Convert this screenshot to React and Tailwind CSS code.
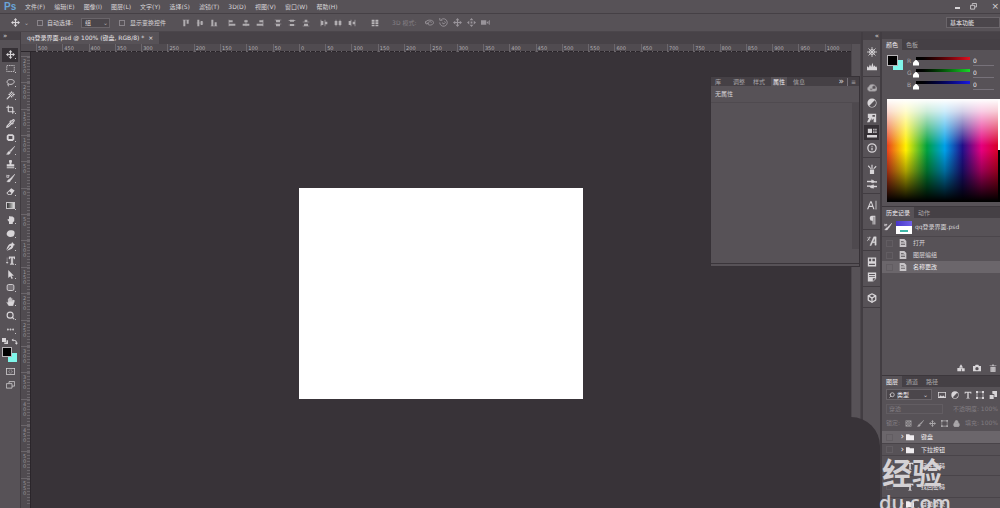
import {
  Box, Crop, Ellipsis, Info, Lock, Pipette, Search, Wand,
} from 'lucide-react'

// ── data ─────────────────────────────────────────────────────────────────────

const MENUS = ['文件(F)', '编辑(E)', '图像(I)', '图层(L)', '文字(Y)', '选择(S)', '滤镜(T)', '3D(D)', '视图(V)', '窗口(W)', '帮助(H)']

const H_RULER = Array.from({ length: 31 }, (_, i) => Math.abs(i * 50 - 500))
const V_RULER = Array.from({ length: 17 }, (_, i) => Math.abs(i * 50 - 250))

// small filled icons on a 12x12 grid
const SHAPES = {
  move: <path d="M6 0l2.500 3H6.800v2.200H9V3.500L12 6 9 8.500V6.800H6.800V9h1.700L6 12 3.500 9h1.700V6.800H3v1.700L0 6l3-2.500v1.700h2.200V3H3.500z" />,
  marquee: <rect x="1" y="2" width="10" height="8" fill="none" stroke="currentColor" strokeDasharray="2 1" />,
  lasso: <path d="M3.500 8C0 6.500 1 2 6 2s6 3 4 5-5 1.800-6.500 1S2 10 4 11" fill="none" stroke="currentColor" strokeWidth="1.200" />,
  patch: <path d="M3 1.500h6l2 2v5l-2 2H3l-2-2v-5zM3.500 4v4h5V4z" fillRule="evenodd" />,
  brush: <path d="M12 0L6.500 7.800 4.800 6.500zM4.200 7l1.800 1.500C5.500 11 3 11.500.5 11 2.500 10 2 7.500 4.200 7z" stroke="currentColor" strokeWidth=".5" />,
  stamp: <path d="M4 1.500a2 1.800 0 0 1 4 0c0 1.500-.8 2-.8 4H11v3H1v-3h3.800c0-2-.8-2.500-.8-4zM1 9.500h10V11H1z" />,
  history: <path d="M12 0L6 5.500 4.500 7C3 7 3 9 1 10c2 1 5 .5 5-1.500L7.500 7zM1 4.500C1 2 3.500 1 5 2.500M1 1v3.500h3" stroke="currentColor" strokeWidth=".6" />,
  eraser: <path d="M7 1.500l4.500 3L7 10.500H3L.5 8zM2 8l1.500 1.500H6L7.200 8 4.500 5.800z" fillRule="evenodd" />,
  smudge: <path d="M4 12V9L2 6.500c0-1 1-1.500 2-.5V2.500C4 1 5.500 1 5.500 2.500 6 .5 7.500 1 7.500 2.500c.5-1 2-.5 2 .8.8-.5 1.500 0 1.500 1V8L9 10v2z" />,
  sponge: <path d="M2 3.500C4 1 9 1 11 3c1 2 .5 5-1 6.500-3 1.500-6 1.500-8-.5C.5 7.500.5 5 2 3.500z" />,
  pen: <path d="M8 0l4 4-2 .5C10 8 7 10 1 11.500L5.500 7A1 1 0 1 0 4.700 6.300L.5 10.800C2 5 4 2.500 7.500 2z" />,
  type: <path d="M4 1h8v3h-1L10.500 2.400H9V10l1.500.5v.8h-5v-.8L7 10V2.400H5.500L5 4H4zM1.500 2v7M0 8l1.500 2L3 8" stroke="currentColor" strokeWidth=".5" />,
  arrow: <path d="M3 0l7.500 7.500H7.300l1.900 3.600-1.700.9-1.800-3.700L3 10.500z" />,
  shape: <rect x="1.500" y="2" width="9" height="8" rx="2" fill="#777277" stroke="currentColor" strokeWidth="1.200" />,
  hand: <path d="M3.500 12L.5 7c0-1 1-1 2 .5V2.500c0-1 1.300-1 1.300 0V1C3.800 0 5.300 0 5.300 1V.8C5.300-.2 7-.2 7 .8V2c0-1 1.600-1 1.600 0v2c0-1 1.500-1 1.500 0L11 4c.8 0 .8 1 .5 2L9.500 12zM3.800 3v3M5.300 2v4M7 2v4M8.600 3v3" stroke="#575257" strokeWidth=".3" />,
  mask: <><rect x=".5" y="2" width="11" height="8" fill="none" stroke="currentColor" /><circle cx="6" cy="6" r="2.200" fill="none" stroke="currentColor" strokeDasharray="1 1" /></>,
  screen: <path d="M4 3V.8h7.500v6H8M.5 3.500H8v6H.5z" fill="none" stroke="currentColor" />,
  swap: <path d="M1 3.500L4 1v2c4 0 6 1.500 6 5h2l-2.700 3.500L6.500 8h2C8.500 5.500 7 4.500 4 4.500V6z" />,
  defaults: <path d="M0 0h8v8H0zM9 4.500h3V12H4.500V9H9z" />,
  wheel: <path d="M6 0v12M0 6h12M1.800 1.800l8.400 8.400M10.200 1.800l-8.400 8.400M9 6a3 3 0 1 1-6 0 3 3 0 0 1 6 0z" fill="none" stroke="currentColor" />,
  histogram: <path d="M0 10V6l1-1 1 2 1.500-4L5 6l1.500-5L8 6l1-2 1 2 1-1 1 2v3z" />,
  cloud: <path d="M3 10a3 3 0 0 1-1-5.500A4.500 4 0 0 1 10.500 4 3 3.200 0 0 1 9.500 10zM3.500 7a1.500 1.500 0 1 0 3-1 2 2 0 1 1 3 1" fillRule="evenodd" fill="#b0adb0" stroke="#898489" strokeWidth=".8" />,
  adjust: <path d="M6 .5a5.500 5.500 0 1 0 0 11 5.500 5.500 0 0 0 0-11zm3.200 2.300A4.500 4.500 0 0 1 2.800 9.200z" fillRule="evenodd" />,
  styles: <path d="M1 1h10v10H8V6.500L5.500 9V6L3 11H0l2.500-5H1zM6.500 2.500v2h3v-2z" fillRule="evenodd" />,
  props: <path d="M1 1h5v5H1zM7.500 1H9v2H7.500zM10 1h1.500v2H10zM7.500 4H9v2H7.500zM10 4h1.500v2H10zM0 8.500h12v3H0z" />,
  brushes: <path d="M3.500 6.500h5V12h-5zM5.300 6V1h1.400v5zM4.200 6L1 2.800 2 1.500 5 5.500zM7.500 5.500L10.500 2l1 1.200L8.500 6z" />,
  presets: <path d="M0 2.500h5.500V1L8 2l1 1-1 1.500H5.500v-1H0zM12 8.500H8V7L4.500 8l-1 1 1 1.500L8 11v-1.500h4zM8 3h4v1H9zM0 8h4v1H0z" stroke="currentColor" strokeWidth=".6" />,
  char: <path d="M0 11L4 1.500h1.500L9 11H7.500L6.600 8.300H2.600L1.600 11zM3 7h3.200L4.700 3zM10.300 1h1v10.500h-1z" fillRule="evenodd" />,
  pilcrow: <path d="M10 1v10.500H8.800V2.200h-.9v9.300H6.700V7A3 3 0 0 1 6 1z" />,
  glyphs: <path d="M3.500 11.500L8 1h3v10H9.500V8H6.500L5 11.500zM7 6.800h2.500V2.500zM0 2h5M3.500.5C3 3 2 5 0 6M1 3.500l3 2" stroke="currentColor" strokeWidth=".5" fillRule="evenodd" />,
  library: <path d="M1 .5h10v11H1zM2.500 2v3H5V2zM6.500 2v3h3V2zM2.500 8v1.500h7V8z" fillRule="evenodd" />,
  notes: <path d="M1 .5h10V8l-3.500 3.500H1zM2.500 2.500v1h7v-1zM2.500 5v1h7V5zM7 11V7.500h3.500z" fillRule="evenodd" />,
  doc: <path d="M1 0h7l3 3v9H1zM3 3v1h4V3zM3 5.500v1h6v-1zM3 8v1h6V8z" fillRule="evenodd" />,
  folder: <path d="M0 2h5l1 1.500h6V11H0z" />,
  newdoc: <path d="M6 .5l2.500 4h-5zM.5 6H6v5H.5zM7 6.500h4.500v4.500H7zM3.500 5h5v2h-5z" />,
  camera: <path d="M0 3h3l1-2h4l1 2h3v8H0zM6 4.500a2.500 2.500 0 1 0 0 5 2.500 2.500 0 0 0 0-5z" fillRule="evenodd" />,
  trash: <path d="M1 2h3.500V.8h3V2H11v1H1zM2 4h8v8H2zM4 5v6M6 5v6M8 5v6" stroke="#575257" strokeWidth=".5" />,
  image: <path d="M0 1.500h12v9H0zM1.200 2.700v6.500l2.800-3 2 2 2-1.500 2.800 2.500V2.700z" fillRule="evenodd" />,
  text: <path d="M1 1h10v3h-1l-.6-1.500H7V10l1.500.5v.8h-5v-.8L5 10V2.500H2.600L2 4H1z" />,
  frame: <path d="M0 0h3v3H0zM9 0h3v3H9zM0 9h3v3H0zM9 9h3v3H9zM3 1h6v1H3zM3 10h6v1H3zM1 3h1v6H1zM10 3h1v6h-1z" />,
  smart: <path d="M1 6h6v6H1zM5 4V0h7v9H8V5z" />,
  checker: <path d="M1 1h10v10H1zM2 2v2h2V2zM6 2v2h2V2zM4 4v2h2V4zM8 4v2h2V4zM2 6v2h2V6zM6 6v2h2V6zM4 8v2h2V8zM8 8v2h2V8z" fillRule="evenodd" />,
  restore: <path d="M4 3V.8h7v6H8.500M1 4h7v6.500H1z" fill="none" stroke="currentColor" strokeWidth="1.400" />,
  grid: <path d="M1 1h4.300v3H1zM6.700 1H11v3H6.700zM1 5h4.300v2.500H1zM6.700 5H11v2.500H6.700zM1 8.500h4.300V11H1zM6.700 8.500H11V11H6.700z" />,
  top: <path d="M1 1h10v1H1zM2 2h3v9H2zM7 2h3v5H7z" />,
  middle: <path d="M2 1h3v10H2zM7 3h3v6H7zM1 5.500h10v1H1z" />,
  bottom: <path d="M1 10h10v1H1zM2 1h3v9H2zM7 5h3v5H7z" />,
  left: <path d="M1 1h1v10H1zM2 2h5v3H2zM2 7h9v3H2z" />,
  center: <path d="M3.500 2h5v3h-5zM1 7h10v3H1zM5.500 1h1v10h-1z" />,
  right: <path d="M10 1h1v10h-1zM5 2h5v3H5zM1 7h9v3H1z" />,
  spreadTop: <path d="M1 1h10v1H1zM3 2h6v3H3zM1 7h10v1H1zM3 8h6v3H3z" />,
  spreadMiddle: <path d="M3 1h6v3H3zM1 2h10v1H1zM3 7.500h6v3H3zM1 8.500h10v1H1z" />,
  spreadBottom: <path d="M4 1h4v3H4zM1 4h10v1H1zM3 7h6v3H3zM1 10h10v1H1z" />,
  spreadLeft: <path d="M1 1h1v10H1zM2 3h3v6H2zM7 1h1v10H7zM8 4h3v4H8z" />,
  spreadCenter: <path d="M1 3h4v6H1zM2.500 1h1v10h-1zM7 3h4v6H7zM8.500 1h1v10h-1z" />,
  spreadRight: <path d="M4 1h1v10H4zM1 3h3v6H1zM10 1h1v10h-1zM7 4h3v4H7z" />,
  orbit: <path d="M1 7c-1.500-4 8-6 10-2s-6 6-7 3 3-4 5-2M0 4l1.500 4L5 7" fill="none" stroke="currentColor" strokeWidth="1.200" />,
  roll: <path d="M3 2a5 5 0 1 1-2 4M1 0v3h3.500M4.500 6a1.800 1.800 0 1 0 3-1.500" fill="none" stroke="currentColor" strokeWidth="1.200" />,
  slide: <path d="M6 0l2.500 3h-5zM6 12L3.500 9h5zM0 6l3-2.500v5zM12 6L9 8.500v-5zM4.800 4.800h2.400v2.400H4.800z" />,
  video: <path d="M0 3h7v6H0zM7.500 6L10 3.500v5zM11 3h1v6h-1z" />,
}

function Glyph({ name, className = 'size-[9px]' }) {
  return (
    <svg viewBox="0 0 12 12" fill="currentColor" aria-hidden="true" className={`shrink-0 ${className}`}>
      {SHAPES[name]}
    </svg>
  )
}

const TOOLS = [
  ['移动', 'move'], ['选框', 'marquee'], ['套索', 'lasso'], ['魔棒', Wand], ['裁剪', Crop],
  ['吸管', Pipette], ['修补', 'patch'], ['画笔', 'brush'], ['图章', 'stamp'], ['历史画笔', 'history'],
  ['橡皮擦', 'eraser'], ['渐变', 'gradient'], ['涂抹', 'smudge'], ['海绵', 'sponge'], ['钢笔', 'pen'],
  ['文字', 'type'], ['路径选择', 'arrow'], ['形状', 'shape'], ['抓手', 'hand'], ['缩放', Search], ['更多', Ellipsis],
]

const DOCK = [
  ['wheel', 'histogram'],
  ['cloud', 'adjust', 'styles', 'props', Info],
  ['brushes', 'presets'],
  ['char', 'pilcrow'],
  ['glyphs'],
  ['library', 'notes'],
  [Box],
]

const ALIGN = [
  ['top', 'middle', 'bottom'],
  ['left', 'center', 'right'],
  ['spreadTop', 'spreadMiddle', 'spreadBottom'],
  ['spreadLeft', 'spreadCenter', 'spreadRight'],
]

function Icon({ icon, className = 'size-[9px]' }) {
  if (icon === 'gradient') return <span className="h-[7px] w-[9px] border border-[#c8c5c8] bg-linear-to-r from-[#333] to-[#ddd]" />
  if (typeof icon === 'string') return <Glyph name={icon} className={className} />
  const Lucide = icon
  return <Lucide className={`shrink-0 ${className}`} strokeWidth={3} />
}

// ── top bars ─────────────────────────────────────────────────────────────────

function MenuBar() {
  return (
    <header className="flex h-[14px] shrink-0 items-center border-b border-[#454045] pr-[1px] pl-[4px]">
      <span className="w-[21px] font-['Liberation_Sans',sans-serif] text-[10px] leading-none font-bold text-[#6aa5d8]">Ps</span>
      <nav className="flex gap-[9px]">
        {MENUS.map(m => <button key={m} type="button">{m}</button>)}
      </nav>
      <div className="ml-auto flex items-center gap-[10px]">
        <button type="button" aria-label="最小化" className="mt-[3px] h-[2px] w-[5px] bg-[#d8d5d8]" />
        <button type="button" aria-label="还原"><Glyph name="restore" className="size-[7px]" /></button>
        <button type="button" aria-label="关闭" className="ml-[4px] text-[9px] leading-none">×</button>
      </div>
    </header>
  )
}

function OptionsBar() {
  return (
    <div className="flex h-[18px] shrink-0 items-center border-b border-[#4b464b] pl-[11px]">
      <Glyph name="move" />
      <span className="ml-[4px] text-[#b0adb0]">⌄</span>
      <label className="ml-[8px] flex items-center gap-[4px]">
        <input type="checkbox" className="size-[6px] appearance-none border border-[#89848a]" />
        自动选择:
      </label>
      <select aria-label="自动选择" className="ml-[8px] h-[10px] w-[29px] appearance-none border border-[#6a656a] bg-[#4b464b] pl-[3px] leading-none">
        <option>组</option>
      </select>
      <span className="-ml-[7px] text-[#b0adb0]">⌄</span>
      <label className="ml-[11px] flex items-center gap-[5px]">
        <input type="checkbox" className="size-[6px] appearance-none border border-[#89848a]" />
        显示变换控件
      </label>
      <div className="ml-[16px] flex gap-[10px] text-[#b0adb0]">
        {ALIGN.map((group, i) => (
          <div key={i} className="flex gap-[6px]">
            {group.map(name => <Glyph key={name} name={name} className="size-[8px]" />)}
          </div>
        ))}
      </div>
      <Glyph name="grid" className="ml-[15px] size-[8px] text-[#b8b5b8]" />
      <span className="ml-[13px] text-[#858085]">3D 模式:</span>
      <div className="ml-[9px] flex gap-[5px] text-[#99949a]">
        {['orbit', 'roll', 'move', 'slide', 'video'].map(name => <Glyph key={name} name={name} />)}
      </div>
      <select aria-label="工作区" className="ml-auto h-[11px] w-[54px] appearance-none border border-[#6a656a] bg-[#4b464b] pl-[3px] text-[#f0edf0]">
        <option>基本功能</option>
      </select>
    </div>
  )
}

// ── left toolbar ─────────────────────────────────────────────────────────────

function Toolbar() {
  return (
    <aside className="flex w-[21px] shrink-0 flex-col border-r border-[#413c41] bg-[#575257]">
      <div className="h-[8px] bg-[#474247] pl-[3px] text-[7px] leading-[8px]">»</div>
      <div className="mt-[8px] grid h-[288px] px-[2px]">
        {TOOLS.map(([label, icon], i) => (
          <button
            key={label}
            type="button"
            aria-label={label}
            className={`flex items-center justify-center ${i === 0 ? 'bg-[#363136]' : ''}`}
          >
            <Icon icon={icon} />
            <span className="mt-[8px] -mr-[2px] size-[1px] bg-[#c8c5c8]" />
          </button>
        ))}
      </div>
      <div className="mt-[2px] flex justify-between px-[2px]">
        <Glyph name="defaults" className="size-[6px]" />
        <Glyph name="swap" className="size-[7px]" />
      </div>
      <div className="mt-[2px] flex pl-[2px]">
        <span className="z-10 size-[10px] border border-[#b8b5b8] bg-black" />
        <span className="mt-[6px] -ml-[4px] size-[9px] bg-[#80f6ea]" />
      </div>
      <div className="mt-[5px] flex flex-col items-center gap-[5px]">
        <Glyph name="mask" />
        <Glyph name="screen" />
      </div>
    </aside>
  )
}

// ── document window ──────────────────────────────────────────────────────────

function Document() {
  return (
    <main className="flex min-w-0 flex-1 flex-col">
      <div className="flex h-[12px] shrink-0 bg-[#474247]">
        <button type="button" className="flex items-center gap-[4px] bg-[#575257] px-[6px] text-[#e8e5e8]">
          qq登录界面.psd @ 100% (键盘, RGB/8) * <span>×</span>
        </button>
      </div>
      <div className="flex min-h-0 flex-1">
        <div className="flex min-w-0 flex-1 flex-col">
          <div className="flex h-[8px] shrink-0 border-b border-[#2b262b] bg-[#504b50]">
            <div className="w-[15px] shrink-0" />
            <div className="grid flex-1 grid-cols-[repeat(31,1fr)]">
              {H_RULER.map((n, i) => (
                <span key={i} className="flex min-w-0 items-start border-l border-[#6b666b] bg-[repeating-linear-gradient(90deg,#6b666b_0_1px,transparent_1px_5px)] bg-[length:100%_1px] bg-bottom bg-no-repeat pl-[1px] text-[5px] leading-[8px] text-[#b5b2b5]">{n}</span>
              ))}
            </div>
          </div>
          <div className="flex min-h-0 flex-1 bg-[#383338]">
            <div className="grid w-[10px] shrink-0 grid-rows-[4px_repeat(17,minmax(0,1fr))_4px] border-r border-[#2b262b] bg-[#504b50]">
              <span />
              {V_RULER.map((n, i) => (
                <span key={i} className="flex flex-col overflow-hidden border-t border-[#6b666b] bg-[repeating-linear-gradient(#6b666b_0_1px,transparent_1px_3px)] bg-[length:3px_100%] bg-right bg-no-repeat pt-[2px] pl-[2px] text-[5px] leading-[5px] text-[#99969a]">
                  {String(n).split('').map((d, j) => <span key={j}>{d}</span>)}
                </span>
              ))}
            </div>
            <div className="flex flex-1 justify-center pt-[136px]">
              <div className="h-[211px] w-[284px] bg-white" />
            </div>
          </div>
        </div>
        <div className="w-[10px] shrink-0 border-x border-[#4b464b] bg-[#575257]" />
      </div>
    </main>
  )
}

function PropertiesPanel() {
  return (
    <section className="absolute top-[76px] right-[140px] flex h-[191px] w-[150px] flex-col border border-[#373237] bg-[#575257]">
      <div className="flex h-[9px] items-center bg-[#454045] text-[#aaa7aa]">
        <div className="flex h-full flex-1 items-center gap-[4px] pl-[4px]">
          <button type="button" className="mr-[6px]">库</button>
          <button type="button" className="px-[2px]">调整</button>
          <button type="button" className="px-[2px]">样式</button>
          <button type="button" className="h-full bg-[#575257] px-[2px] text-[#f0edf0]">属性</button>
          <button type="button" className="px-[2px]">信息</button>
        </div>
        <span className="px-[3px] text-[9px] leading-none text-[#d8d5d8]">»</span>
        <span className="border-l border-[#77727a] px-[3px]">≡</span>
      </div>
      <p className="flex h-[17px] items-center border-b border-[#4f4a4f] pl-[4px] text-[#d8d5d8]">无属性</p>
      <div className="flex flex-1 justify-end">
        <div className="mb-[14px] w-[7px] bg-[#4e494e]" />
      </div>
      <div className="h-[3px] border-t border-[#3a353a]" />
    </section>
  )
}

// ── right docks ──────────────────────────────────────────────────────────────

function IconDock() {
  return (
    <aside className="flex w-[21px] shrink-0 flex-col border-x-2 border-[#423d42] bg-[#575257]">
      <div className="h-[8px] bg-[#474247] pr-[1px] text-right text-[7px] leading-[8px]">«</div>
      <div className="pt-[1px]">
        {DOCK.map((group, i) => (
          <div key={i} className="flex flex-col border-b border-[#423d42] pt-[3px] pb-[2px]">
            {group.map((icon, j) => (
              <button
                key={j}
                type="button"
                aria-label={`面板 ${i + 1}-${j + 1}`}
                className={`mx-[1px] flex h-[15px] items-center justify-center ${icon === 'props' ? 'bg-[#363136]' : ''}`}
              >
                <Icon icon={icon} className="size-[10px]" />
              </button>
            ))}
          </div>
        ))}
      </div>
    </aside>
  )
}

function Tabs({ items }) {
  return (
    <div className="flex h-[11px] shrink-0 bg-[#454045] text-[#aaa7aa]">
      {items.map((t, i) => (
        <button key={t} type="button" className={`px-[4px] ${i === 0 ? 'bg-[#575257] text-[#f0edf0]' : ''}`}>{t}</button>
      ))}
    </div>
  )
}

const CHANNELS = [
  ['R', 'bg-linear-to-r from-black to-[#e01020]'],
  ['G', 'bg-linear-to-r from-black to-[#18d828]'],
  ['B', 'bg-linear-to-r from-black to-[#1818e0]'],
]

function ColorPanel() {
  return (
    <section className="flex h-[167px] shrink-0 flex-col">
      <Tabs items={['颜色', '色板']} />
      <div className="flex h-[49px] pt-[5px] pl-[5px]">
        <div className="flex w-[20px]">
          <span className="z-10 size-[11px] border border-[#b8b5b8] bg-black" />
          <span className="mt-[5px] -ml-[5px] size-[10px] bg-[#80f6ea]" />
        </div>
        <div className="flex-1">
          {CHANNELS.map(([name, bar]) => (
            <div key={name} className="flex h-[12px] items-center">
              <label htmlFor={`ch-${name}`} className="w-[9px] text-[#aaa7aa]">{name}</label>
              <div className="w-[54px]">
                <div className={`h-[3px] ${bar}`} />
                <input
                  id={`ch-${name}`}
                  type="range"
                  min="0"
                  max="255"
                  defaultValue="0"
                  className="-ml-[3px] block h-[6px] w-[60px] appearance-none bg-transparent [&::-webkit-slider-thumb]:size-[6px] [&::-webkit-slider-thumb]:appearance-none [&::-webkit-slider-thumb]:bg-white [&::-webkit-slider-thumb]:[clip-path:polygon(50%_0,100%_50%,100%_100%,0_100%,0_50%)]"
                />
              </div>
              <input aria-label={`${name} 值`} defaultValue="0" className="ml-[3px] h-[9px] w-[21px] border-b border-[#77727a] bg-transparent text-[#e8e5e8]" />
            </div>
          ))}
        </div>
      </div>
      <div className="flex h-[103px] pl-[5px]">
        <div className="flex-1 bg-[linear-gradient(#fff_0%,#fffc_12%,#fff0_45%,#0000_50%,#0005_70%,#000_99%),linear-gradient(90deg,#e8401c_0%,#fff000_17%,#00a040_36%,#00a0e8_52%,#201088_68%,#e4007f_85%,#d80028_100%)]" />
        <div className="w-[2px] bg-[linear-gradient(#fff_50%,#000_50%)]" />
      </div>
    </section>
  )
}

function HistoryPanel() {
  return (
    <section className="flex h-[169px] shrink-0 flex-col border-t border-[#3c373c]">
      <Tabs items={['历史记录', '动作']} />
      <div className="flex h-[19px] items-center border-b border-[#4b464b] pl-[2px]">
        <Glyph name="history" className="size-[8px]" />
        <span className="mr-[3px] ml-[4px] flex h-[13px] w-[16px] flex-col bg-white">
          <span className="h-[5px] bg-linear-to-r from-[#4a36c8] to-[#7060e8]" />
          <span className="mx-[4px] mt-[4px] h-[2px] bg-[#40b8a8]" />
        </span>
        qq登录界面.psd
      </div>
      <ul>
        {['打开', '图层编组', '名称更改'].map((s, i) => (
          <li key={s} className={`flex h-[12px] items-center ${i === 2 ? 'bg-[#6b666b] text-[#f0edf0]' : ''}`}>
            <span className="mx-[4px] size-[7px] border border-[#625d62]" />
            <Glyph name="doc" className="mr-[6px] ml-[2px] size-[8px] text-[#c8c5c8]" />
            {s}
          </li>
        ))}
      </ul>
      <div className="mt-auto flex h-[14px] items-center justify-end gap-[8px] pr-[3px]">
        <button type="button" aria-label="新建文档"><Glyph name="newdoc" className="size-[8px]" /></button>
        <button type="button" aria-label="快照"><Glyph name="camera" className="size-[8px]" /></button>
        <button type="button" aria-label="删除"><Glyph name="trash" className="size-[8px]" /></button>
      </div>
    </section>
  )
}

const LAYERS = [
  { name: '键盘', icon: 'folder', row: 'h-[13px] bg-[#6b666b]' },
  { name: '下拉按钮', icon: 'folder', row: 'h-[12px]' },
  { name: '记住密码', icon: 'text', row: 'h-[20px]' },
  { name: '找回密码', icon: 'text', row: 'h-[22px]' },
  { name: '自动登录', icon: 'folder', row: 'h-[12px]' },
]

function LayersPanel() {
  return (
    <section className="flex min-h-0 flex-1 flex-col overflow-hidden border-t border-[#3c373c]">
      <Tabs items={['图层', '通道', '路径']} />
      <div className="flex h-[15px] shrink-0 items-center pl-[4px]">
        <div className="flex h-[11px] w-[46px] items-center border border-[#6a656a] bg-[#4b464b] pl-[2px]">
          <Search className="size-[6px] shrink-0 -scale-x-100" strokeWidth={3} />
          <select aria-label="类型" className="w-[28px] appearance-none pl-[2px] text-[#f0edf0]">
            <option>类型</option>
          </select>
          <span>⌄</span>
        </div>
        <div className="flex flex-1 justify-between pr-[3px] pl-[6px]">
          {['image', 'adjust', 'text', 'frame', 'smart'].map(n => <Glyph key={n} name={n} className="size-[8px]" />)}
        </div>
      </div>
      <div className="flex h-[14px] shrink-0 items-center justify-between pr-[2px] pl-[4px] text-[#817c81]">
        <select aria-label="混合模式" className="h-[10px] w-[57px] appearance-none border border-[#625d62] pl-[2px]">
          <option>穿透</option>
        </select>
        <span className="whitespace-nowrap">不透明度: 100%</span>
      </div>
      <div className="flex h-[14px] shrink-0 items-center justify-between pr-[2px] pl-[4px] whitespace-nowrap text-[#817c81]">
        锁定:
        <span className="flex gap-[5px] text-[#aaa7aa]">
          <Glyph name="checker" className="size-[7px]" />
          <Glyph name="brush" className="size-[7px]" />
          <Glyph name="move" className="size-[7px]" />
          <Glyph name="frame" className="size-[7px]" />
          <Lock className="size-[7px]" fill="currentColor" strokeWidth={3} />
        </span>
        填充: 100%
      </div>
      <ul className="pt-[1px]">
        {LAYERS.map(l => (
          <li key={l.name} className={`flex items-center border-b border-[#494449] text-[#f0edf0] ${l.row}`}>
            <span className="ml-[4px] size-[7px] border border-[#625d62]" />
            <span className="w-[11px] text-right text-[8px] leading-none">{l.icon === 'folder' ? '›' : ''}</span>
            <Glyph name={l.icon} className="mr-[7px] ml-[2px] size-[8px]" />
            {l.name}
          </li>
        ))}
      </ul>
    </section>
  )
}

export default function App() {
  return (
    <div className="relative flex h-screen flex-col overflow-hidden bg-[#575257] font-['DejaVu_Sans','Noto_Sans_CJK_SC',sans-serif] text-[6px] leading-[8px] text-[#d8d5d8]">
      <MenuBar />
      <OptionsBar />
      <div className="flex min-h-0 flex-1">
        <Toolbar />
        <Document />
        <IconDock />
        <div className="flex w-[118px] shrink-0 flex-col">
          <div className="h-[7px] shrink-0 bg-[#474247]" />
          <ColorPanel />
          <HistoryPanel />
          <LayersPanel />
        </div>
      </div>
      <PropertiesPanel />

      {/* rounded corner and site mark over the lower right */}
      <div className="absolute right-[120px] bottom-0 h-[91px] w-[29px] rounded-tr-[29px] bg-[#383338]" />
      <div className="absolute right-0 bottom-0 flex h-[53px] w-[121px] flex-col overflow-hidden font-['Open_Sans','Noto_Sans_CJK_SC',sans-serif] whitespace-nowrap text-[#d4d1d4]">
        <span className="pl-[3px] text-[30px] leading-[36px] font-bold">经验</span>
        <span className="text-[20px] leading-[24px] font-semibold">du.com</span>
      </div>
    </div>
  )
}
